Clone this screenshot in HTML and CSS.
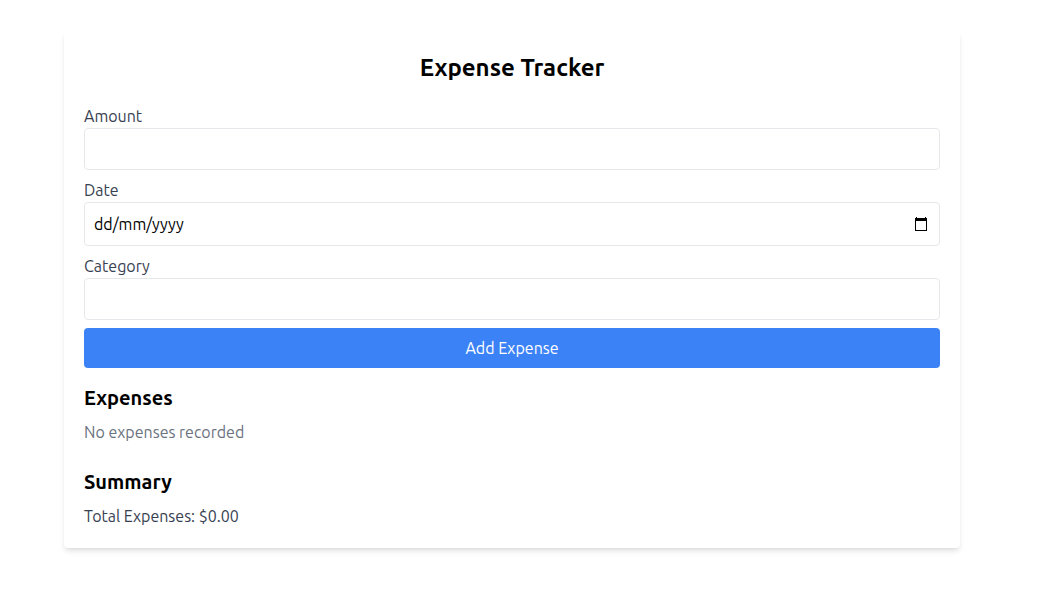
FILE: index.html
```
<!DOCTYPE html>
<html lang="en-GB">
<head>
  <meta charset="UTF-8">
  <title>Expense Tracker</title>
  <meta name="viewport" content="width=device-width, initial-scale=1.0">
  <link rel="stylesheet" href="styles.css">
</head>

<body>

  <main class="page">
    <div class="card">
      <h1 class="title">Expense Tracker</h1>

      <!-- New expense form -->
      <form class="expense-form" id="expense-form">
        <div class="field">
          <label for="amount">Amount</label>
          <input type="number" id="amount" name="amount">
        </div>
        <div class="field">
          <label for="date">Date</label>
          <!-- Text box, so that the day comes first in every browser locale -->
          <div class="date-box">
            <input type="text" id="date" name="date" class="date-input" placeholder="dd/mm/yyyy">
            <button type="button" class="date-button" aria-label="Show date picker">
              <svg width="16" height="16" viewBox="0 0 16 16" fill="#000" aria-hidden="true">
                <path fill-rule="evenodd" d="M2 2h12v13H2zM3 5v9h10V5z"/>
                <path d="M3 1h1v1H3zM12 1h1v1h-1z"/>
              </svg>
            </button>
          </div>
        </div>
        <div class="field">
          <label for="category">Category</label>
          <input type="text" id="category" name="category">
        </div>
        <button type="submit" class="button">Add Expense</button>
      </form>

      <!-- Recorded expenses -->
      <section class="expenses">
        <h2>Expenses</h2>
        <p class="empty">No expenses recorded</p>
      </section>

      <!-- Totals -->
      <section class="summary">
        <h2>Summary</h2>
        <p>Total Expenses: $0.00</p>
      </section>
    </div>
  </main>

</body>
</html>
```
FILE: styles.css
```
/* Reset */
* {
  margin: 0;
  padding: 0;
  box-sizing: border-box;
}
body {
  font-family: Ubuntu, "Noto Sans", sans-serif;
  font-size: 16px;
  line-height: 24px;
  background: #fff;
  color: #000;
}

.page {
  max-width: 1024px;
  padding: 32px 64px;
}

.card {
  padding: 20px;
  background: #fff;
  border-radius: 4px;
  box-shadow: 0 4px 6px -1px rgba(0,0,0,0.1), 0 2px 4px -2px rgba(0,0,0,0.1);
}

.title {
  margin-bottom: 20px;
  font-size: 24px;
  line-height: 32px;
  font-weight: 700;
  text-align: center;
}

/* Form */
.expense-form {
  display: flex;
  flex-direction: column;
  gap: 8px;
}
.field label {
  display: block;
  color: #374151;
}
.field input {
  display: block;
  width: 100%;
  height: 42px;
  padding: 8px;
  font: inherit;
  color: #000;
  background: #fff;
  border: 1px solid #e5e7eb;
  border-radius: 4px;
}

/* Date box: the border goes round the input and its icon */
.date-box {
  display: flex;
  align-items: center;
  height: 44px;
  padding-right: 10px;
  border: 1px solid #e5e7eb;
  border-radius: 4px;
}
.field .date-input {
  flex: 1;
  min-width: 0;
  padding: 8px 9px;
  border: none;
}
.date-input::placeholder {
  color: #000;
}
.date-button {
  display: flex;
  background: none;
  border: none;
  cursor: pointer;
}

.button {
  padding: 8px;
  font: inherit;
  color: #fff;
  background: #3b82f6;
  border: none;
  border-radius: 4px;
  cursor: pointer;
}
.button:hover {
  background: #2563eb;
}

/* List and summary */
.expenses {
  margin-top: 16px;
}
.summary {
  margin-top: 24px;
}
h2 {
  margin-bottom: 8px;
  font-size: 20px;
  line-height: 28px;
  font-weight: 700;
}
.empty {
  color: #6b7280;
}
.summary p {
  color: #374151;
}
```
